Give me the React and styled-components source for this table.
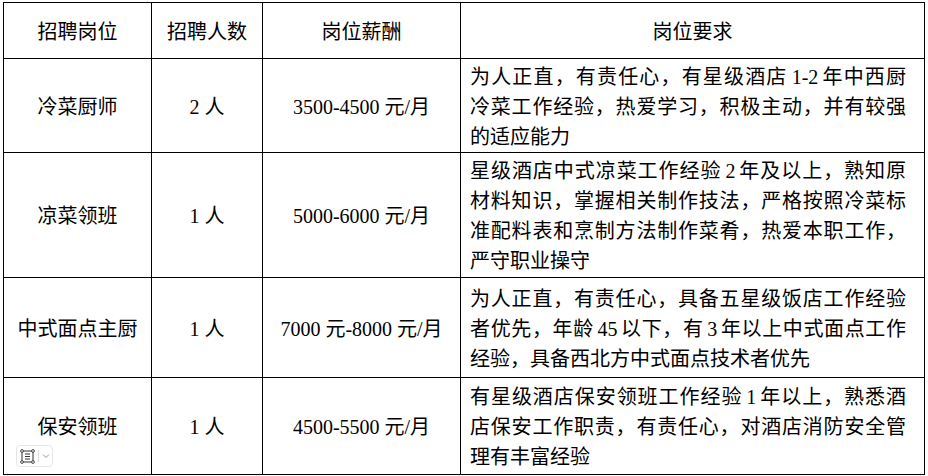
import React from "react";
import styled, { createGlobalStyle } from "styled-components";

const GlobalStyle = createGlobalStyle`
  html, body {
    margin: 0;
    padding: 0;
    background: #fff;
  }
  body {
    font-family: "Liberation Serif", "Noto Sans CJK SC", serif;
    color: #000;
  }
`;

const Page = styled.div`
  position: relative;
  padding: 2px 0 0 3px;
  width: 928px;
  height: 476px;
  box-sizing: border-box;
  overflow: hidden;
`;

const Grid = styled.div`
  display: grid;
  grid-template-columns: 148px 111px 198px 464px;
  grid-template-rows: 56px 94px 125px 100px 97px;
  width: max-content;
  border-left: 1px solid #000;
  border-top: 1px solid #000;
`;

const Cell = styled.div`
  box-sizing: border-box;
  border-right: 1px solid #000;
  border-bottom: 1px solid #000;
  display: flex;
  flex-direction: column;
  justify-content: center;
  align-items: ${(p) => (p.$wide ? "stretch" : "center")};
  padding: ${(p) => (p.$wide ? "2px 18px 0 9px" : "2px 0 0")};
  font-size: 20px;
  line-height: 30px;
  white-space: nowrap;
`;

const Line = styled.div`
  word-spacing: -2px;
  text-align: justify;
  text-align-last: ${(p) => (p.$last ? "left" : "justify")};
`;

const Floater = styled.div`
  position: absolute;
  left: 16px;
  top: 445px;
  width: 37px;
  height: 22px;
  box-sizing: border-box;
  border: 1px solid #e6e6e6;
  border-radius: 4px;
  background: #fff;
  display: flex;
  align-items: center;
  padding-left: 3px;
  gap: 3px;
`;

const Divider = styled.span`
  width: 1px;
  height: 12px;
  background: #dcdcdc;
`;

const headers = ["招聘岗位", "招聘人数", "岗位薪酬", "岗位要求"];

const rows = [
  {
    title: "冷菜厨师",
    count: "2 人",
    pay: "3500-4500 元/月",
    req: [
      "为人正直，有责任心，有星级酒店 1-2 年中西厨",
      "冷菜工作经验，热爱学习，积极主动，并有较强",
      "的适应能力",
    ],
  },
  {
    title: "凉菜领班",
    count: "1 人",
    pay: "5000-6000 元/月",
    req: [
      "星级酒店中式凉菜工作经验 2 年及以上，熟知原",
      "材料知识，掌握相关制作技法，严格按照冷菜标",
      "准配料表和烹制方法制作菜肴，热爱本职工作，",
      "严守职业操守",
    ],
  },
  {
    title: "中式面点主厨",
    count: "1 人",
    pay: "7000 元-8000 元/月",
    req: [
      "为人正直，有责任心，具备五星级饭店工作经验",
      "者优先，年龄 45 以下，有 3 年以上中式面点工作",
      "经验，具备西北方中式面点技术者优先",
    ],
  },
  {
    title: "保安领班",
    count: "1 人",
    pay: "4500-5500 元/月",
    req: [
      "有星级酒店保安领班工作经验 1 年以上，熟悉酒",
      "店保安工作职责，有责任心，对酒店消防安全管",
      "理有丰富经验",
    ],
  },
];

const FrameIcon = () => (
  <svg width="15" height="15" viewBox="0 0 15 15" fill="none">
    <rect x="2" y="2" width="11" height="11" stroke="#333" strokeWidth="1" />
    <line x1="5" y1="5" x2="10" y2="5" stroke="#333" />
    <line x1="5" y1="7.5" x2="10" y2="7.5" stroke="#333" />
    <line x1="5" y1="10" x2="10" y2="10" stroke="#333" />
    <circle cx="2" cy="2" r="1.4" fill="#fff" stroke="#333" strokeWidth="0.9" />
    <circle cx="13" cy="2" r="1.4" fill="#fff" stroke="#333" strokeWidth="0.9" />
    <circle cx="2" cy="13" r="1.4" fill="#fff" stroke="#333" strokeWidth="0.9" />
    <circle cx="13" cy="13" r="1.4" fill="#fff" stroke="#333" strokeWidth="0.9" />
  </svg>
);

const Chevron = () => (
  <svg width="8" height="6" viewBox="0 0 8 6" fill="none">
    <path d="M1 1.5 L4 4.5 L7 1.5" stroke="#999" strokeWidth="1" />
  </svg>
);

const App = () => {
  return (
    <Page>
      <GlobalStyle />
      <Grid>
        {headers.map((h, i) => (
          <Cell key={h}>{h}</Cell>
        ))}
        {rows.map((r) => (
          <React.Fragment key={r.title}>
            <Cell>{r.title}</Cell>
            <Cell>{r.count}</Cell>
            <Cell>{r.pay}</Cell>
            <Cell $wide>
              {r.req.map((line, i) => (
                <Line key={i} $last={i === r.req.length - 1}>
                  {line}
                </Line>
              ))}
            </Cell>
          </React.Fragment>
        ))}
      </Grid>
      <Floater>
        <FrameIcon />
        <Divider />
        <Chevron />
      </Floater>
    </Page>
  );
};

export default App;
